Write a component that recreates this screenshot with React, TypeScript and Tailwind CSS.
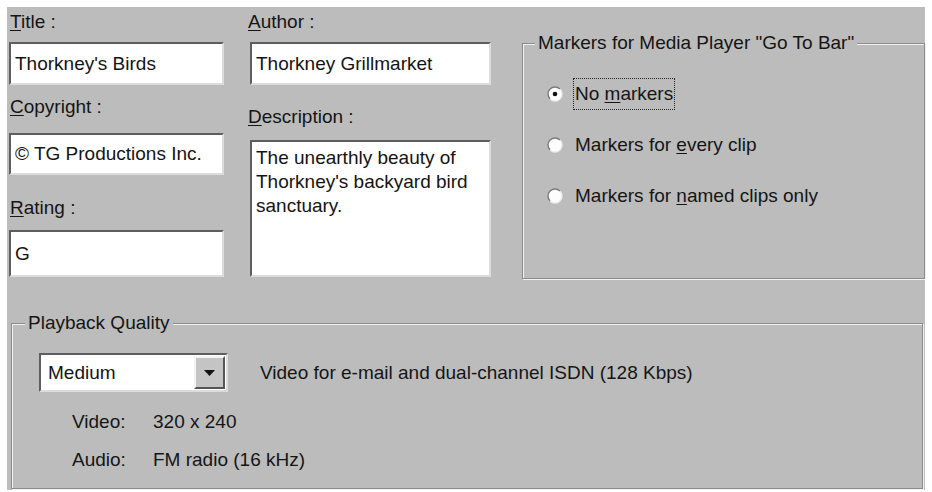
import React from "react";

const sunken =
  "border-2 border-t-[#5e5e5e] border-l-[#5e5e5e] border-b-[#dcdcdc] border-r-[#dcdcdc] bg-white";

function Label({ k, rest }: { k: string; rest: string }) {
  return (
    <div className="h-[22px] whitespace-nowrap">
      <u className="underline-offset-2">{k}</u>
      {rest}
    </div>
  );
}

function TextBox({ value, className }: { value: string; className: string }) {
  return (
    <div className={`${sunken} flex items-center pl-[4px] text-[#141414] ${className}`}>
      {value}
    </div>
  );
}

function Radio({ checked }: { checked?: boolean }) {
  return (
    <svg width="16" height="16" viewBox="0 0 16 16" className="shrink-0">
      <circle cx="8" cy="8" r="7" fill="#fdfdfd" />
      <path d="M3.05 12.95 A7 7 0 0 1 12.95 3.05" fill="none" stroke="#7c7c7c" strokeWidth="1.4" />
      <path d="M12.95 3.05 A7 7 0 0 1 3.05 12.95" fill="none" stroke="#ececec" strokeWidth="1.4" />
      {checked && <circle cx="8" cy="8" r="2.3" fill="#111" />}
    </svg>
  );
}

function RadioRow({
  before,
  k,
  after,
  checked,
  focused,
}: {
  before: string;
  k: string;
  after: string;
  checked?: boolean;
  focused?: boolean;
}) {
  return (
    <div className="flex h-[32px] items-center">
      <Radio checked={checked} />
      <span
        className={`ml-[10px] inline-block h-[32px] whitespace-pre border px-[1px] leading-[30px] ${
          focused ? "border-dotted border-[#222]" : "border-transparent"
        }`}
      >
        {before}
        <u className="underline-offset-2">{k}</u>
        {after}
      </span>
    </div>
  );
}

export default function App() {
  return (
    <div className="h-[492px] w-[932px] bg-white pl-[7px] pt-[7px] font-['Liberation_Sans',Arial,sans-serif] text-[19px] leading-[22px] text-[#151515]">
      <div className="flex h-[483px] w-[918px] flex-col bg-[#bcbcbc] pl-[2px] pt-[4px]">
        {/* top row */}
        <div className="flex h-[267px] items-start">
          <div className="flex w-[215px] flex-col">
            <div className="pl-[1px]">
              <Label k="T" rest="itle :" />
            </div>
            <TextBox value="Thorkney's Birds" className="mt-[9px] h-[43px]" />
            <div className="mt-[11px] pl-[1px]">
              <Label k="C" rest="opyright :" />
            </div>
            <TextBox value="© TG Productions Inc." className="mt-[15px] h-[42px]" />
            <div className="mt-[22px] pl-[1px]">
              <Label k="R" rest="ating :" />
            </div>
            <TextBox value="G" className="mt-[11px] h-[47px]" />
          </div>

          <div className="ml-[24px] flex w-[243px] flex-col">
            <Label k="A" rest="uthor :" />
            <TextBox value="Thorkney Grillmarket" className="ml-[2px] mt-[9px] h-[43px]" />
            <div className="mt-[21px]">
              <Label k="D" rest="escription :" />
            </div>
            <div
              className={`${sunken} ml-[2px] mt-[12px] h-[137px] pl-[4px] pr-[4px] pt-[4px] leading-[24px] text-[#141414]`}
            >
              The unearthly beauty of Thorkney's backyard bird sanctuary.
            </div>
          </div>

          <fieldset className="ml-[31px] mt-[21px] h-[247px] w-[403px] border border-[#8a8a8a] px-0 shadow-[inset_1px_1px_0_#f2f2f2,1px_1px_0_#f2f2f2]">
            <legend className="ml-[12px] bg-[#bcbcbc] px-[3px] leading-[22px] whitespace-nowrap">
              Markers for Media Player "Go To Bar"
            </legend>
            <div className="mt-[24px] flex flex-col gap-[19px] pl-[24px]">
              <RadioRow before="No " k="m" after="arkers" checked focused />
              <RadioRow before="Markers for " k="e" after="very clip" />
              <RadioRow before="Markers for " k="n" after="amed clips only" />
            </div>
          </fieldset>
        </div>

        {/* playback quality */}
        <fieldset className="ml-[2px] mt-[34px] h-[177px] w-[912px] border border-[#8a8a8a] px-0 shadow-[inset_1px_1px_0_#f2f2f2,1px_1px_0_#f2f2f2]">
          <legend className="ml-[13px] bg-[#bcbcbc] px-[3px] leading-[22px]">Playback Quality</legend>
          <div className="mt-[19px] flex items-center pl-[27px]">
            <div className={`${sunken} flex h-[39px] w-[189px] items-center p-[1px]`}>
              <span className="flex-1 pl-[6px] text-[#141414]">Medium</span>
              <div className="flex h-full w-[31px] items-center justify-center border-2 border-t-[#f4f4f4] border-l-[#f4f4f4] border-b-[#555] border-r-[#555] bg-[#c4c4c4]">
                <svg width="11" height="6" viewBox="0 0 11 6">
                  <path d="M0 0 H11 L5.5 6 Z" fill="#111" />
                </svg>
              </div>
            </div>
            <span className="ml-[32px] whitespace-nowrap">
              Video for e-mail and dual-channel ISDN (128 Kbps)
            </span>
          </div>
          <div className="mt-[19px] flex pl-[60px]">
            <span className="w-[81px]">Video:</span>
            <span>320 x 240</span>
          </div>
          <div className="mt-[16px] flex pl-[60px]">
            <span className="w-[81px]">Audio:</span>
            <span>FM radio (16 kHz)</span>
          </div>
        </fieldset>
      </div>
    </div>
  );
}
